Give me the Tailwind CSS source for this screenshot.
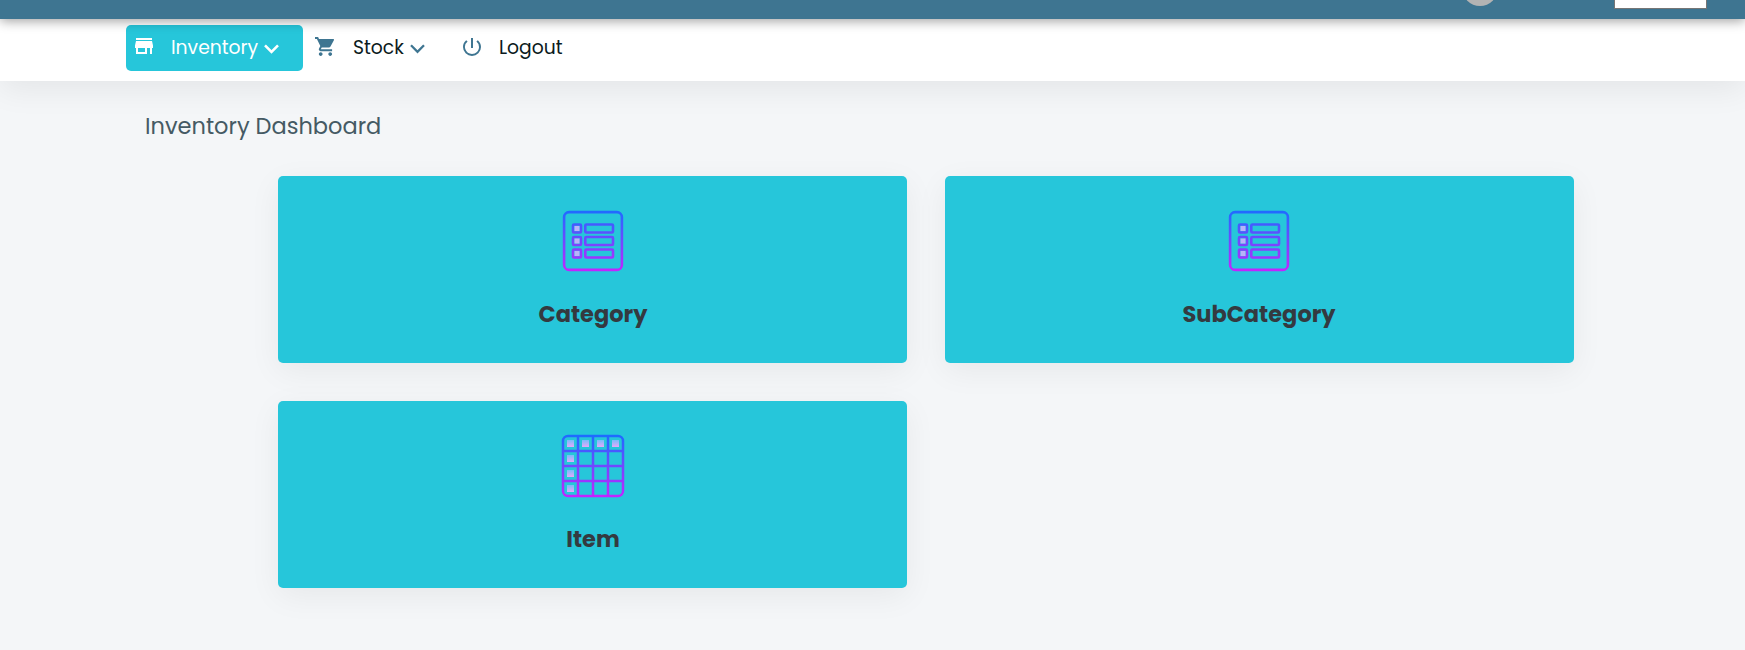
<!DOCTYPE html>
<html lang="en">
<head>
<meta charset="utf-8">
<title>Inventory Dashboard</title>
<script src="https://cdn.jsdelivr.net/npm/@tailwindcss/browser@4"></script>
</head>
<body class="bg-[#f4f6f8] h-[650px] overflow-hidden font-['Poppins','Inter',sans-serif]">
<svg width="0" height="0" class="absolute">
  <defs>
    <linearGradient id="g" gradientUnits="userSpaceOnUse" x1="0" y1="0" x2="0" y2="64"><stop offset="0" stop-color="#1a6dff"/><stop offset="1" stop-color="#c822ff"/></linearGradient>
    <linearGradient id="p" x1="0" y1="0" x2="0" y2="1"><stop offset="0" stop-color="#78bdfb"/><stop offset="1" stop-color="#e4a8fa"/></linearGradient>
    <symbol id="list" viewBox="0 0 64 64">
      <g fill="none" stroke="url(#g)" stroke-width="2.600">
        <rect x="3.100" y="3.100" width="57.800" height="57.800" rx="5"/>
        <rect x="12" y="15.500" width="8" height="8" rx="1"/><rect x="12" y="28" width="8" height="8" rx="1"/><rect x="12" y="40.500" width="8" height="8" rx="1"/>
        <rect x="24.300" y="15.500" width="27.700" height="8" rx="1"/><rect x="24.300" y="28" width="27.700" height="8" rx="1"/><rect x="24.300" y="40.500" width="27.700" height="8" rx="1"/>
      </g>
      <path fill="#b9b2fa" d="M13.500 17h5v5h-5zM13.500 29.500h5v5h-5zM13.500 42h5v5h-5z"/>
    </symbol>
  </defs>
</svg>

<header class="relative z-20 h-[19px] bg-[#3e7591] shadow-[0_2px_12px_rgba(0,0,0,0.38)] flex justify-end items-start pr-[38px]">
  <div class="w-[34px] h-[6px] mr-[117px] overflow-hidden flex items-end justify-center"><div class="size-[36px] shrink-0 rounded-full bg-[#b3b3b3]"></div></div>
  <div class="w-[93px] h-[9px] bg-white border border-t-0 border-[#767676]"></div>
</header>

<nav class="relative z-10 h-[62px] bg-white shadow-[0_8px_32px_rgba(0,0,0,0.07)] flex items-start pl-[126px] pt-[6px] text-[18.75px] text-[#0b1a20]">
  <a class="w-[177px] h-[46px] rounded-[5px] bg-[#26c6da] text-white flex items-center pl-[9px]">
    <svg class="w-[18px] h-[16px] -mt-[4px]" viewBox="0 0 18 16" fill="#fff"><path d="M1 0h16v1.900H1zM1 3h16l1 4.600V10h-1v6h-2v-6h-3v6H1v-6H0V7.600zM3 10v4h7v-4z"/></svg>
    <span class="ml-[18px] w-[86px] h-[28px] leading-[28px] whitespace-nowrap">Inventory</span>
    <svg class="ml-[7px] w-[15px] h-[10px] mt-[2px]" viewBox="0 0 15 10" fill="none" stroke="#fff" stroke-width="2.600"><path d="M1 1.300l6.500 6.500L14 1.300"/></svg>
  </a>
  <a class="h-[46px] flex items-center pl-[12px]">
    <svg class="w-[19px] h-[19px] -mt-[3px]" viewBox="1 2 20 20" preserveAspectRatio="none" fill="#3e7591"><path d="M7 18c-1.100 0-1.990.9-1.990 2S5.900 22 7 22s2-.9 2-2-.9-2-2-2zM1 2v2h2l3.600 7.590-1.350 2.450c-.16.280-.25.610-.25.960 0 1.100.9 2 2 2h12v-2H7.420c-.14 0-.25-.11-.25-.25l.03-.12.9-1.630h7.450c.75 0 1.410-.41 1.750-1.030l3.580-6.490A1 1 0 0 0 20 4H5.210l-.94-2H1zm16 16c-1.100 0-1.990.9-1.990 2s.890 2 1.990 2 2-.9 2-2-.9-2-2-2z"/></svg>
    <span class="ml-[19px] w-[50px] h-[28px] leading-[28px] whitespace-nowrap">Stock</span>
    <svg class="ml-[7px] w-[15px] h-[10px] mt-[2px]" viewBox="0 0 15 10" fill="none" stroke="#3e7591" stroke-width="2.300"><path d="M1 1.300l6.500 6.500L14 1.300"/></svg>
  </a>
  <a class="h-[46px] flex items-center pl-[38px]">
    <svg class="w-[18px] h-[18px] -mt-[3px]" viewBox="3 3 18 18" fill="#3e7591"><path d="M13 3h-2v10h2V3zm4.830 2.170l-1.420 1.420A6.920 6.920 0 0 1 19 12c0 3.870-3.130 7-7 7A6.995 6.995 0 0 1 7.580 6.580L6.170 5.170A8.932 8.932 0 0 0 3 12a9 9 0 0 0 18 0c0-2.740-1.230-5.180-3.170-6.830z"/></svg>
    <span class="ml-[18px] h-[28px] leading-[28px] whitespace-nowrap">Logout</span>
  </a>
</nav>

<main>
  <h1 class="pl-[145px] pt-[29px] h-[95px] text-[22.5px] leading-[32px] text-[#455a64]">Inventory Dashboard</h1>
  <div class="ml-[278px] grid grid-cols-[629px_629px] gap-[38px] text-[22.5px] font-bold text-[#343a40]">
    <section class="h-[187px] rounded-[5px] bg-[#26c6da] shadow-[0_8px_32px_rgba(0,0,0,0.06)] flex flex-col items-center pt-[33px] pl-px">
      <svg class="w-[64px] h-[64px]"><use href="#list"/></svg>
      <h2 class="mt-[25px] leading-[32px]">Category</h2>
    </section>
    <section class="h-[187px] rounded-[5px] bg-[#26c6da] shadow-[0_8px_32px_rgba(0,0,0,0.06)] flex flex-col items-center pt-[33px] pr-px">
      <svg class="w-[64px] h-[64px]"><use href="#list"/></svg>
      <h2 class="mt-[25px] leading-[32px]">SubCategory</h2>
    </section>
    <section class="h-[187px] rounded-[5px] bg-[#26c6da] shadow-[0_8px_32px_rgba(0,0,0,0.06)] flex flex-col items-center pt-[33px] pl-px">
      <svg class="w-[64px] h-[64px]" viewBox="0 0 64 64">
        <g fill="none" stroke="url(#g)" stroke-width="2.500"><rect x="2" y="2" width="60" height="60" rx="5"/><path d="M17 2v60M32 2v60M47 2v60M2 17h60M2 32h60M2 47h60"/></g>
        <g fill="url(#p)"><rect x="6" y="6" width="7" height="7"/><rect x="21" y="6" width="7" height="7"/><rect x="36" y="6" width="7" height="7"/><rect x="51" y="6" width="7" height="7"/><rect x="6" y="21" width="7" height="7"/><rect x="6" y="36" width="7" height="7"/><rect x="6" y="51" width="7" height="7"/></g>
      </svg>
      <h2 class="mt-[25px] leading-[32px]">Item</h2>
    </section>
  </div>
</main>
</body>
</html>
